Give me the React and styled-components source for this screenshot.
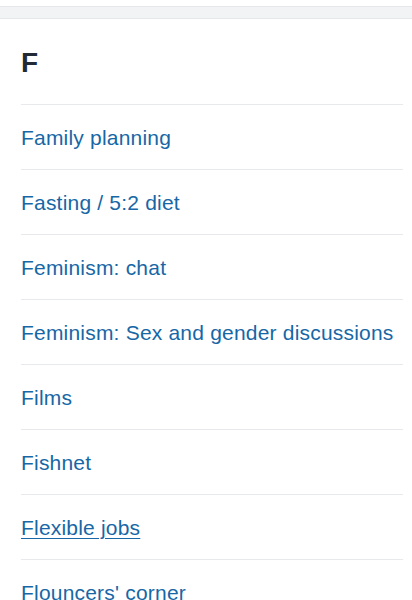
import React from "react";
import styled, { createGlobalStyle } from "styled-components";

const GlobalStyle = createGlobalStyle`
  html, body {
    margin: 0;
    padding: 0;
    background: #ffffff;
    font-family: "Liberation Sans", Arial, sans-serif;
  }
`;

const Page = styled.div`
  width: 100%;
  padding-top: 6px;
`;

const TopStrip = styled.div`
  height: 11px;
  background: #f2f3f5;
  border-top: 1px solid #e6e7ea;
  border-bottom: 1px solid #e6e7ea;
`;

const Section = styled.section`
  margin: 0 9px 0 21px;
`;

const Letter = styled.h2`
  margin: 0;
  height: 86px;
  padding-top: 2px;
  box-sizing: border-box;
  display: flex;
  align-items: center;
  font-size: 28px;
  font-weight: 700;
  color: #222a36;
  border-bottom: 1px solid #e8e9ec;
`;

const List = styled.ul`
  list-style: none;
  margin: 0;
  padding: 0;
`;

const Item = styled.li`
  height: 65px;
  padding-top: 2px;
  box-sizing: border-box;
  display: flex;
  align-items: center;
  border-bottom: 1px solid #e8e9ec;
`;

const Topic = styled.a`
  font-size: 21px;
  letter-spacing: 0.2px;
  color: #1767a6;
  text-decoration: ${(p) => (p.$active ? "underline" : "none")};
  text-underline-offset: 3px;
  text-decoration-thickness: 1px;
`;

const topics = [
  "Family planning",
  "Fasting / 5:2 diet",
  "Feminism: chat",
  "Feminism: Sex and gender discussions",
  "Films",
  "Fishnet",
  "Flexible jobs",
  "Flouncers' corner",
];

export default function App() {
  return (
    <>
      <GlobalStyle />
      <Page>
        <TopStrip />
        <Section>
          <Letter>F</Letter>
          <List>
            {topics.map((t) => (
              <Item key={t}>
                <Topic href="#" $active={t === "Flexible jobs"}>
                  {t}
                </Topic>
              </Item>
            ))}
          </List>
        </Section>
      </Page>
    </>
  );
}
